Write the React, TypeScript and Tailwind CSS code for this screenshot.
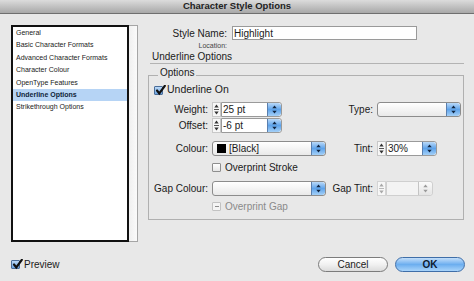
import React from 'react';

const font = "font-['Liberation_Sans',Arial,sans-serif]";

const Arrows: React.FC<{ color?: string }> = ({ color = '#1a1a1a' }) => (
    <svg width="5" height="9" viewBox="0 0 5 9">
        <path d="M2.5 0.5 L4.7 3.3 L0.3 3.3 Z" fill={color} />
        <path d="M2.5 8.5 L4.7 5.7 L0.3 5.7 Z" fill={color} />
    </svg>
);

const Check: React.FC = () => (
    <svg width="11" height="11" viewBox="0 0 11 11" className="absolute -top-[2px] left-[0px]">
        <path d="M2 5.5 L4.3 8.4 L9.8 0.8" stroke="#111" strokeWidth="2.2" fill="none" strokeLinecap="round" />
    </svg>
);

const Checkbox: React.FC<{ checked?: boolean; mixed?: boolean; disabled?: boolean }> = ({ checked, mixed, disabled }) => (
    <div
        className={`relative w-[9px] h-[9px] rounded-[1px] border ${
            checked
                ? 'border-[#4a6d99] bg-gradient-to-b from-[#bcd9f7] to-[#6aa3e0]'
                : disabled
                ? 'border-[#c2c2c2] bg-[#f4f4f4]'
                : 'border-[#8e8e8e] bg-gradient-to-b from-[#ffffff] to-[#e6e6e6]'
        }`}
    >
        {checked && <Check />}
        {mixed && <div className="absolute left-[2px] top-[3px] w-[4px] h-[1px] bg-[#8c8c8c]" />}
    </div>
);

const BlueButton: React.FC<{ disabled?: boolean }> = ({ disabled }) => (
    <div
        className={`w-[14px] h-full flex items-center justify-center rounded-r-[3px] border-l ${
            disabled
                ? 'bg-gradient-to-b from-[#fbfbfb] to-[#e4e4e4] border-[#c4c4c4]'
                : 'bg-gradient-to-b from-[#b9d9f8] via-[#5ea3ea] to-[#a4d0f7] border-[#5a7fae]'
        }`}
    >
        <Arrows color={disabled ? '#9a9a9a' : '#10243f'} />
    </div>
);

const Popup: React.FC<{ width: string; children?: React.ReactNode }> = ({ width, children }) => (
    <div className={`${width} h-[15px] flex items-stretch border border-[#8c8c8c] rounded-[3px] bg-gradient-to-b from-[#ffffff] to-[#e9e9e9] overflow-hidden`}>
        <div className="flex-1 flex items-center gap-[3px] pl-[4px] text-[10px]">{children}</div>
        <BlueButton />
    </div>
);

const Spinner: React.FC<{ disabled?: boolean }> = ({ disabled }) => (
    <div className={`w-[9px] h-full flex flex-col items-center justify-center border ${disabled ? 'border-[#d4d4d4]' : 'border-[#c8c8c8]'} bg-[#f7f7f7]`}>
        <svg width="5" height="11" viewBox="0 0 5 11">
            <path d="M2.5 0.5 L4.7 3.5 L0.3 3.5 Z" fill={disabled ? '#a8a8a8' : '#333'} />
            <line x1="0" y1="5.5" x2="5" y2="5.5" stroke={disabled ? '#b8b8b8' : '#555'} strokeWidth="1" />
            <path d="M2.5 10.5 L4.7 7.5 L0.3 7.5 Z" fill={disabled ? '#a8a8a8' : '#333'} />
        </svg>
    </div>
);

const ComboField: React.FC<{ value: string; width: string; disabled?: boolean }> = ({ value, width, disabled }) => (
    <div className="flex h-[15px]">
        <Spinner disabled={disabled} />
        <div className={`${width} flex items-stretch border ${disabled ? 'border-[#cfcfcf] bg-[#f3f3f3]' : 'border-[#9a9a9a] bg-white'} rounded-r-[3px] overflow-hidden`}>
            <div className="flex-1 flex items-center pl-[1px] text-[10px]">{value}</div>
            <BlueButton disabled={disabled} />
        </div>
    </div>
);

const navItems = [
    'General',
    'Basic Character Formats',
    'Advanced Character Formats',
    'Character Colour',
    'OpenType Features',
    'Underline Options',
    'Strikethrough Options',
];

export default function App() {
    return (
        <div className={`w-[474px] h-[281px] bg-[#e8e8e8] text-[#1a1a1a] flex flex-col overflow-hidden ${font}`}>
            {/* title bar */}
            <div className="h-[14px] flex items-center justify-center bg-gradient-to-b from-[#dcdcdc] to-[#a8a8a8] border-b border-[#6f6f6f] text-[9.5px] font-bold text-[#222]">
                Character Style Options
            </div>

            <div className="flex h-[228px]">
                {/* category list */}
                <div className="ml-[11px] mt-[11px] h-[217px] w-[127px] flex">
                    <div className="w-[118px] h-full border-2 border-[#111] bg-white">
                        {navItems.map(item => (
                            <div
                                key={item}
                                className={`h-[12.4px] leading-[12.4px] pl-[3px] text-[7px] ${
                                    item === 'Underline Options' ? 'bg-[#b6d4f5] font-bold text-[#0f1f3a]' : 'text-[#222]'
                                }`}
                            >
                                {item}
                            </div>
                        ))}
                    </div>
                    <div className="w-[9px] h-full border-y border-r border-[#a5a5a5] bg-gradient-to-r from-[#f0f0f0] to-[#fafafa]" />
                </div>

                {/* right side */}
                <div className="flex-1 flex flex-col">
                    <div className="mt-[12px] h-[14px] flex items-center">
                        <div className="w-[89px] text-right text-[10px]">Style Name:</div>
                        <div className="ml-[5px] w-[185px] h-full border border-[#9a9a9a] bg-white flex items-center pl-[1px] text-[10px]">
                            Highlight
                        </div>
                    </div>
                    <div className="mt-[2px] h-[8px] flex items-center">
                        <div className="w-[89px] text-right text-[7px] text-[#444]">Location:</div>
                    </div>
                    <div className="mt-[1px] ml-[12px] mr-[10px] h-[13px] border-b border-[#b3b3b3] pl-[2px] text-[10px] leading-[12px]">
                        Underline Options
                    </div>

                    <fieldset className="mt-[5px] ml-[10px] mr-[10px] border border-[#b0b0b0] pb-[7px]">
                        <legend className="ml-[9px] px-[2px] text-[10px] leading-[8px] pb-[4px]">Options</legend>

                        <div className="mt-[3px] h-[12px] flex items-center pl-[5px] gap-[4px] text-[10.5px]">
                            <Checkbox checked />
                            <span>Underline On</span>
                        </div>

                        <div className="mt-[6px] h-[15px] flex items-center text-[10px]">
                            <div className="w-[59px] text-right">Weight:</div>
                            <div className="ml-[4px] w-[117px]">
                                <ComboField value="25 pt" width="w-[61px]" />
                            </div>
                            <div className="w-[44px] text-right">Type:</div>
                            <div className="ml-[4px]">
                                <Popup width="w-[84px]" />
                            </div>
                        </div>

                        <div className="mt-[1px] h-[15px] flex items-center text-[10px]">
                            <div className="w-[59px] text-right">Offset:</div>
                            <div className="ml-[4px]">
                                <ComboField value="-6 pt" width="w-[61px]" />
                            </div>
                        </div>

                        <div className="mt-[8px] h-[15px] flex items-center text-[10px]">
                            <div className="w-[59px] text-right">Colour:</div>
                            <div className="ml-[4px] w-[117px]">
                                <Popup width="w-[114px]">
                                    <div className="w-[9px] h-[9px] bg-black" />
                                    <span>[Black]</span>
                                </Popup>
                            </div>
                            <div className="w-[44px] text-right">Tint:</div>
                            <div className="ml-[4px]">
                                <ComboField value="30%" width="w-[51px]" />
                            </div>
                        </div>

                        <div className="mt-[5px] h-[12px] flex items-center text-[10px]">
                            <div className="ml-[63px] flex items-center gap-[4px]">
                                <Checkbox />
                                <span>Overprint Stroke</span>
                            </div>
                        </div>

                        <div className="mt-[8px] h-[15px] flex items-center text-[10px]">
                            <div className="w-[59px] text-right whitespace-nowrap">Gap Colour:</div>
                            <div className="ml-[4px] w-[117px]">
                                <Popup width="w-[114px]" />
                            </div>
                            <div className="w-[44px] text-right whitespace-nowrap">Gap Tint:</div>
                            <div className="ml-[4px]">
                                <ComboField value="" width="w-[47px]" disabled />
                            </div>
                        </div>

                        <div className="mt-[4px] h-[12px] flex items-center text-[10px]">
                            <div className="ml-[63px] flex items-center gap-[4px] text-[#8a8a8a]">
                                <Checkbox mixed disabled />
                                <span>Overprint Gap</span>
                            </div>
                        </div>
                    </fieldset>
                </div>
            </div>

            {/* bottom bar */}
            <div className="mt-[15px] h-[15px] flex items-center">
                <div className="ml-[11px] flex items-center gap-[4px] text-[10px]">
                    <Checkbox checked />
                    <span>Preview</span>
                </div>
                <div className="ml-auto mr-[9px] flex gap-[7px]">
                    <button className="w-[70px] h-[15px] rounded-full border border-[#7c7c7c] bg-gradient-to-b from-[#ffffff] via-[#f1f1f1] to-[#dcdcdc] text-[10px] leading-[13px]">
                        Cancel
                    </button>
                    <button className="w-[70px] h-[15px] rounded-full border border-[#3f6ea8] bg-gradient-to-b from-[#c3def9] via-[#6caeef] to-[#a9d4fa] text-[10px] leading-[13px] font-bold text-[#0e1c33]">
                        OK
                    </button>
                </div>
            </div>
        </div>
    );
}
